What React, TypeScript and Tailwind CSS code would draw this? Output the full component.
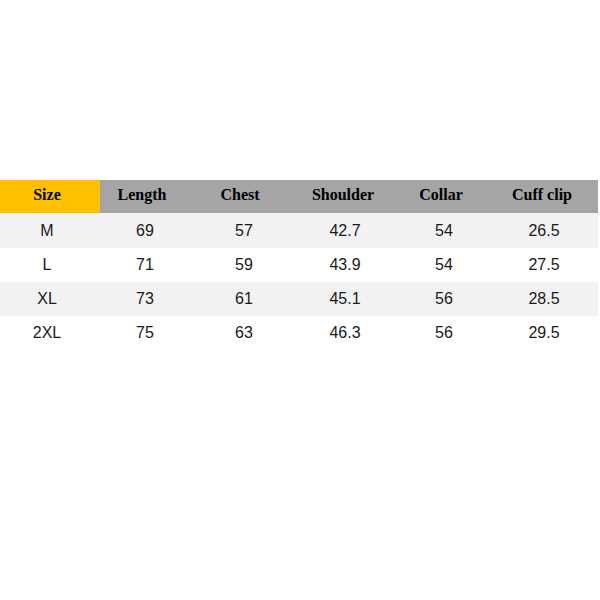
import React from "react";

const rows = [
  ["M", "69", "57", "42.7", "54", "26.5"],
  ["L", "71", "59", "43.9", "54", "27.5"],
  ["XL", "73", "61", "45.1", "56", "28.5"],
  ["2XL", "75", "63", "46.3", "56", "29.5"],
];

const heights = ["h-[35px]", "h-[34px]", "h-[34px]", "h-[34px]"];

export default function App() {
  return (
    <div className="w-[600px] h-[600px] bg-white overflow-hidden">
      <div className="pt-[180px] w-[598px]">
        <div
          className="grid grid-cols-[100px_84px_112px_94px_102px_100px_6px] h-[33px] items-stretch text-[16px] font-bold text-black"
          style={{ fontFamily: '"Liberation Serif", "Times New Roman", serif' }}
        >
          <div className="bg-[#ffc000] flex items-center justify-center pr-[6px] pb-[3px]">Size</div>
          <div className="bg-[#a5a5a5] flex items-center justify-center pb-[3px]">Length</div>
          <div className="bg-[#a5a5a5] flex items-center justify-center pb-[3px]">Chest</div>
          <div className="bg-[#a5a5a5] flex items-center justify-center pb-[3px]">Shoulder</div>
          <div className="bg-[#a5a5a5] flex items-center justify-center pb-[3px]">Collar</div>
          <div className="bg-[#a5a5a5] flex items-center justify-center pb-[3px]">Cuff clip</div>
          <div className="bg-[#a5a5a5]"></div>
        </div>
        {rows.map((r, i) => (
          <div
            key={i}
            className={`grid grid-cols-[94px_102px_96px_106px_92px_108px] ${heights[i]} items-center text-[16px] text-[#1a1a1a] ${i % 2 === 0 ? "bg-[#f2f2f2]" : "bg-white"}`}
            style={{ fontFamily: '"Liberation Sans", Arial, sans-serif' }}
          >
            {r.map((c, j) => (
              <div key={j} className="text-center">
                {c}
              </div>
            ))}
          </div>
        ))}
      </div>
    </div>
  );
}
